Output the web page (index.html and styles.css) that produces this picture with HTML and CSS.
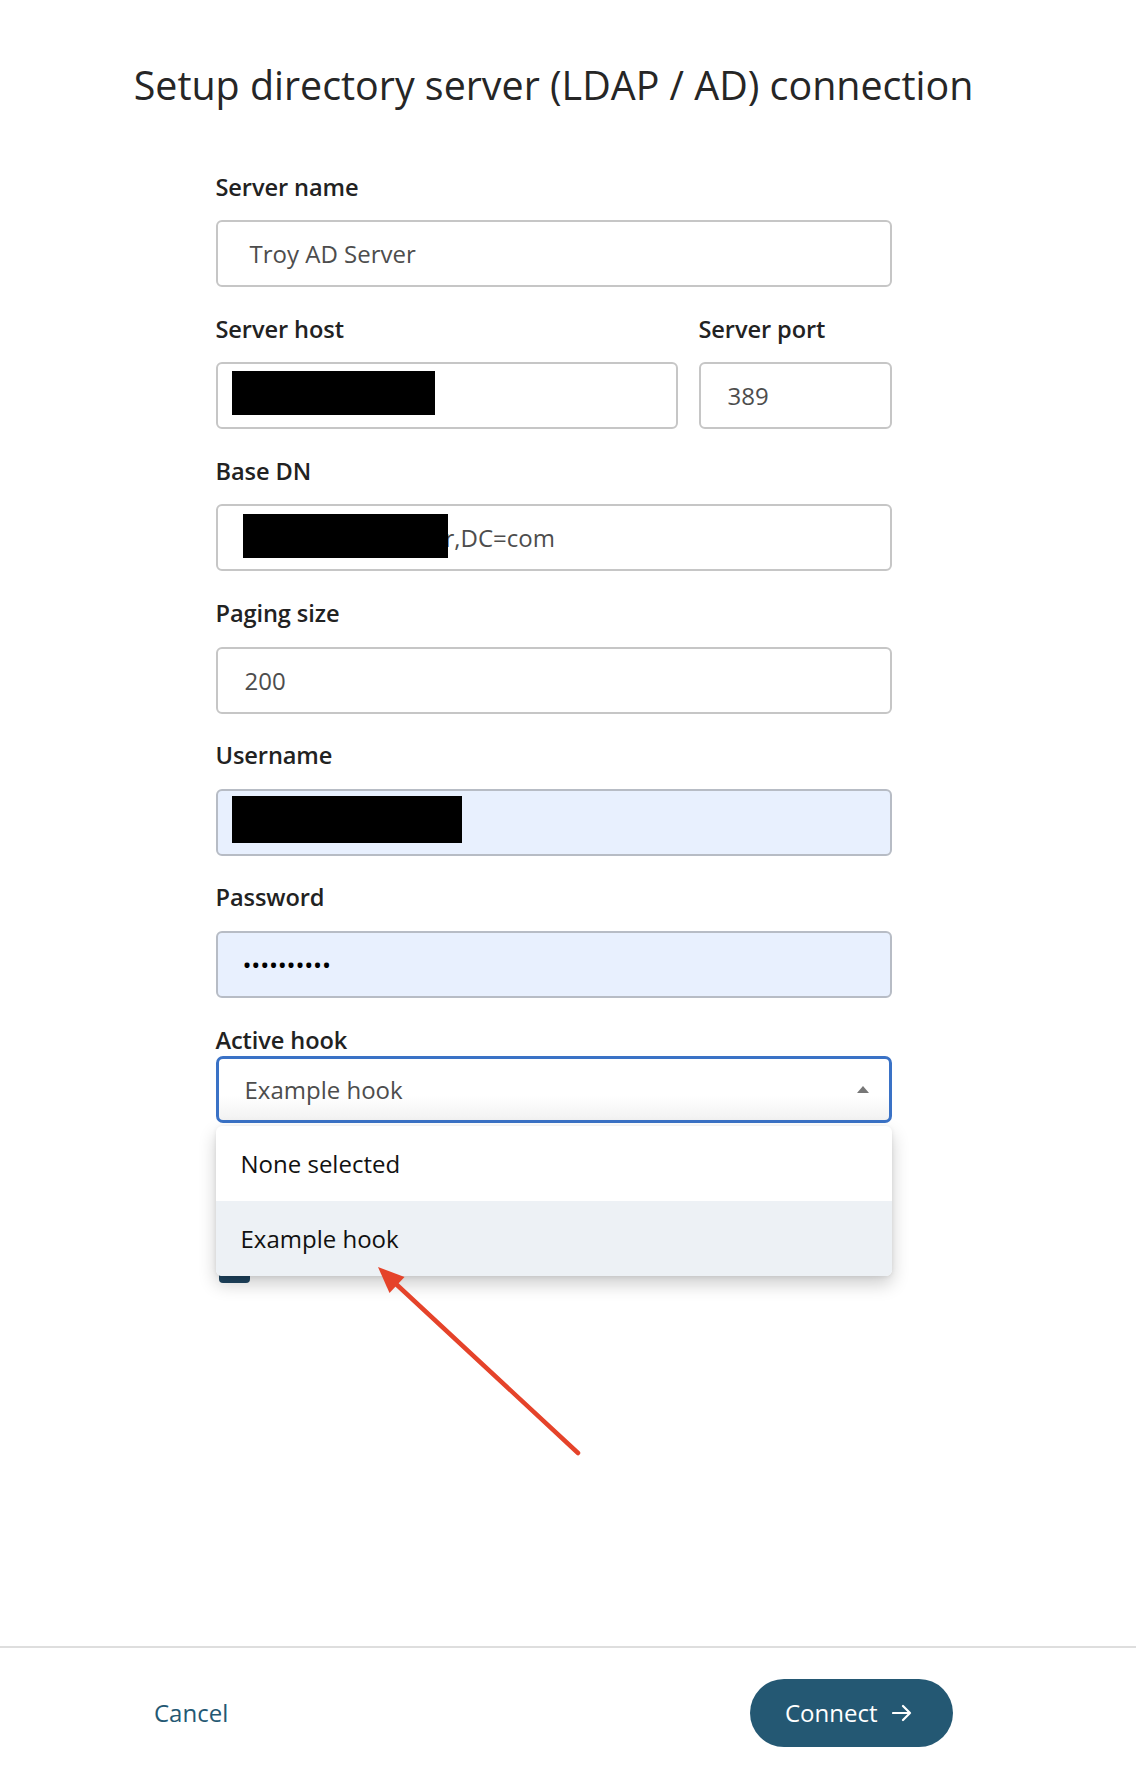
FILE: index.html
```html
<!DOCTYPE html>
<html lang="en">
<head>
<meta charset="utf-8">
<title>Setup directory server</title>
<link rel="stylesheet" href="styles.css">
</head>
<body>
<div class="page">
  <main class="main">
    <h1 class="title">Setup directory server (LDAP / AD) connection</h1>
    <form class="form">
      <div class="field">
        <label class="label">Server name</label>
        <div class="input input-name">Troy AD Server</div>
      </div>
      <div class="row">
        <div class="field host">
          <label class="label">Server host</label>
          <div class="input"><span class="redact redact-host"></span></div>
        </div>
        <div class="field port">
          <label class="label">Server port</label>
          <div class="input">389</div>
        </div>
      </div>
      <div class="field">
        <label class="label">Base DN</label>
        <div class="input"><span class="dn-hidden"></span>r,DC=com<span class="redact redact-dn"></span></div>
      </div>
      <div class="field">
        <label class="label">Paging size</label>
        <div class="input">200</div>
      </div>
      <div class="field">
        <label class="label">Username</label>
        <div class="input autofill"><span class="redact redact-user"></span></div>
      </div>
      <div class="field">
        <label class="label">Password</label>
        <div class="input autofill dots">••••••••••</div>
      </div>
      <div class="field hook">
        <label class="label label-tight">Active hook</label>
        <div class="select-wrap">
          <div class="select">Example hook<span class="caret"></span></div>
          <ul class="menu">
            <li class="menu-item">None selected</li>
            <li class="menu-item active">Example hook</li>
          </ul>
        </div>
      </div>
      <div class="check-row"><span class="checkbox"></span></div>
    </form>
    <svg class="annotation" width="230" height="215" viewBox="0 0 230 215">
      <line x1="218" y1="203" x2="36" y2="34" stroke="#e5432a" stroke-width="4.5" stroke-linecap="round"/>
      <polygon points="18,17 44.5,27 29.5,43" fill="#e5432a"/>
    </svg>
  </main>
  <footer class="footer">
    <span class="cancel">Cancel</span>
    <span class="connect">Connect
      <svg class="connect-arrow" width="20" height="18" viewBox="0 0 20 18"><path d="M1 9h17M11 2l7 7-7 7" fill="none" stroke="#fff" stroke-width="2.2" stroke-linecap="round" stroke-linejoin="round"/></svg>
    </span>
  </footer>
</div>
</body>
</html>
```
FILE: styles.css
```css
* { box-sizing: border-box; }
html, body { margin: 0; padding: 0; background: #fff; }
body { font-family: "Open Sans", "Noto Sans", sans-serif; color: #222; }

.page {
  position: relative;
  width: 1136px;
  height: 1768px;
  display: flex;
  flex-direction: column;
}

.main {
  flex: 1;
  width: 1107px;
}

.title {
  margin: 0 0 58.5px;
  padding-top: 59px;
  font-size: 39.4px;
  line-height: 53px;
  font-weight: 400;
  text-align: center;
  color: #262626;
}

.form {
  width: 676px;
  margin: 0 auto;
}

.row { display: flex; gap: 21px; }
.host { flex: 1; }
.port { width: 193px; }

.field { margin-bottom: 25.7px; }

.label {
  display: block;
  font-size: 23.6px;
  font-weight: 600;
  line-height: 32px;
  margin-bottom: 17.5px;
  color: #222;
  letter-spacing: -0.1px;
}
.label-tight { margin-bottom: 0; }

.input {
  position: relative;
  height: 67px;
  border: 2px solid #c6c6c6;
  border-radius: 6px;
  padding-left: 27px;
  display: flex;
  align-items: center;
  font-size: 24px;
  color: #4d4d4d;
  background: #fff;
}
.input-name { padding-left: 32px; }
.input.autofill {
  background: #e8f0fe;
  border-color: #b7bcc5;
}
.input.dots { color: #000; font-size: 24px; letter-spacing: -0.2px; padding-left: 25px; }

.redact { position: absolute; background: #000; }
.redact-host { left: 14px; top: 7px; width: 203px; height: 44px; }
.redact-dn { left: 25px; top: 8px; width: 205px; height: 44px; }
.redact-user { left: 14px; top: 5px; width: 230px; height: 47px; }

.dn-hidden { display: inline-block; width: 200px; }

.hook { margin-bottom: 0; }
.select-wrap { position: relative; }
.select {
  position: relative;
  height: 67px;
  border: 3px solid #3a72c6;
  border-radius: 7px;
  padding-left: 26px;
  display: flex;
  align-items: center;
  font-size: 24px;
  color: #4d4d4d;
  background: linear-gradient(#fff 60%, #f2f2f2);
}
.caret {
  position: absolute;
  right: 20px;
  top: 27px;
  width: 0;
  height: 0;
  border-left: 6.5px solid transparent;
  border-right: 6.5px solid transparent;
  border-bottom: 7px solid #777;
}

.menu {
  position: absolute;
  z-index: 2;
  left: 0;
  right: 0;
  top: 70px;
  margin: 0;
  padding: 0;
  list-style: none;
  background: #fff;
  border-radius: 6px;
  box-shadow: 0 8px 18px rgba(0,0,0,0.2), 0 1px 4px rgba(0,0,0,0.08);
  overflow: hidden;
}
.menu-item {
  height: 75px;
  display: flex;
  align-items: center;
  padding-left: 25px;
  font-size: 24px;
  color: #111;
}
.menu-item.active { background: #edf1f5; }

.check-row { margin-top: 128px; padding-left: 3px; }
.checkbox {
  display: block;
  width: 31px;
  height: 32px;
  border-radius: 4px;
  background: #1f4560;
}

.annotation {
  position: absolute;
  left: 360px;
  top: 1250px;
  z-index: 3;
}

.footer {
  height: 122px;
  border-top: 2px solid #dedede;
  display: flex;
  align-items: center;
  justify-content: space-between;
  padding: 9px 183px 0 154px;
}
.cancel {
  font-size: 24px;
  color: #245873;
}
.connect {
  width: 203px;
  height: 68px;
  border-radius: 34px;
  background: #245873;
  color: #fff;
  font-size: 24px;
  display: flex;
  align-items: center;
  padding-left: 35px;
  gap: 14px;
}
.connect-arrow { display: block; margin-top: 1px; }
```
